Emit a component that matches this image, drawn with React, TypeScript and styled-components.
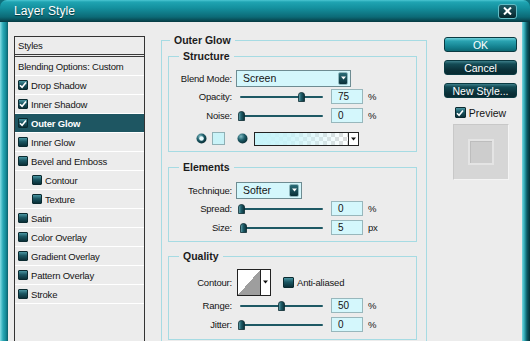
import React from 'react';
import styled, { createGlobalStyle } from 'styled-components';

const sans = `"Liberation Sans", Arial, sans-serif`;

const GlobalStyle = createGlobalStyle`
  html, body {
    margin: 0;
    padding: 0;
    background: #ececec;
  }
`;

const Window = styled.div`
  width: 530px;
  height: 341px;
  overflow: hidden;
  display: flex;
  flex-direction: column;
  background: #0f6f7b;
  font-family: ${sans};
  font-size: 9.5px;
  letter-spacing: -0.2px;
  color: #141414;
`;

const TitleBar = styled.div`
  height: 22px;
  flex: none;
  display: flex;
  align-items: center;
  justify-content: space-between;
  padding: 0 13px 0 14px;
  border-radius: 7px 7px 0 0;
  background: linear-gradient(#4cc6d2 0, #1fa4b2 2px, #14909e 8px, #0c6a76 17px, #07444d 21px, #053840 22px);
`;

const Title = styled.span`
  font-size: 12px;
  letter-spacing: 0.1px;
  color: #fff;
  text-shadow: 0 1px 1px rgba(0, 0, 0, 0.55);
`;

const CloseButton = styled.div`
  width: 19px;
  height: 15px;
  box-sizing: border-box;
  border: 1px solid #62bcc6;
  border-radius: 3px;
  background: linear-gradient(#1d5a64, #06262c);
  display: flex;
  align-items: center;
  justify-content: center;
`;

const Frame = styled.div`
  flex: 1;
  min-height: 0;
  display: flex;
  padding: 0 8px;
  background:
    linear-gradient(to right, #86dde5 0, #2aa9b6 3px, #138896 6px, #0b5d68 8px, transparent 8px),
    linear-gradient(to left, #042e35 0, #0b5a65 3px, #39b4c0 6px, #7fd6de 8px, transparent 8px),
    #0f6f7b;
`;

const Body = styled.div`
  flex: 1;
  min-width: 0;
  overflow: hidden;
  display: flex;
  align-items: flex-start;
  padding: 12px 0 0 6px;
  background: #ececec;
`;

/* ---------- left list ---------- */

const StyleList = styled.div`
  width: 131px;
  height: 330px;
  flex: none;
  box-sizing: border-box;
  margin-top: 2px;
  border: 1px solid #333;
  background: #ececec;
`;

const ListHeader = styled.div`
  height: 17px;
  display: flex;
  align-items: center;
  padding-left: 3px;
  border-bottom: 3px double #3a3a3a;
`;

const ListItem = styled.div<{ $active?: boolean; $indent?: boolean }>`
  height: 18px;
  display: flex;
  align-items: center;
  padding-left: ${p => (p.$indent ? 17 : 3)}px;
  border-bottom: 1px solid #fff;
  white-space: nowrap;
  background: ${p => (p.$active ? '#1e5662' : 'transparent')};
  color: ${p => (p.$active ? '#fff' : '#141414')};
  font-weight: ${p => (p.$active ? 'bold' : 'normal')};
`;

const Box = styled.span<{ $size?: number }>`
  width: ${p => p.$size ?? 10}px;
  height: ${p => p.$size ?? 10}px;
  flex: none;
  box-sizing: border-box;
  margin-right: 3px;
  border: 1px solid #0a2a30;
  border-radius: 1px;
  background: linear-gradient(#4a95a1, #1a5662 45%, #0b3038);
  display: flex;
  align-items: center;
  justify-content: center;
`;

const CheckBox = ({ checked, size }: { checked?: boolean; size?: number }) => (
  <Box $size={size}>
    {checked && (
      <svg width="8" height="8" viewBox="0 0 8 8">
        <path d="M1 4.2 L3.1 6.3 L7 1.6" fill="none" stroke="#fff" strokeWidth="1.6" />
      </svg>
    )}
  </Box>
);

/* ---------- groups ---------- */

const OuterGroup = styled.fieldset`
  width: 266px;
  flex: none;
  box-sizing: border-box;
  margin: 0 0 0 16px;
  padding: 4px 9px 40px 6px;
  border: 1px solid #a6dbe3;
`;

const Group = styled.fieldset<{ $gap?: number; $top: number; $bottom: number }>`
  margin: ${p => p.$gap ?? 0}px 0 0 0;
  padding: ${p => p.$top}px 0 ${p => p.$bottom}px 0;
  border: 1px solid #a6dbe3;
`;

const Legend = styled.legend<{ $indent: number }>`
  margin-left: ${p => p.$indent}px;
  padding: 0 4px;
  font-weight: bold;
  font-size: 10.5px;
  letter-spacing: 0;
  line-height: 12px;
  color: #1b1b1b;
`;

const Row = styled.div<{ $h?: number; $mt?: number }>`
  height: ${p => p.$h ?? 19}px;
  margin-top: ${p => p.$mt ?? 0}px;
  display: flex;
  align-items: center;
`;

const Label = styled.span`
  width: 63px;
  flex: none;
  margin-right: 4px;
  text-align: right;
`;

const Select = styled.div<{ $w: number }>`
  width: ${p => p.$w}px;
  height: 17px;
  box-sizing: border-box;
  border: 1px solid #6e8c92;
  background: #d4f7fc;
  display: flex;
  align-items: center;
  justify-content: space-between;
  padding: 0 2px 0 6px;
  font-size: 10.5px;
  letter-spacing: 0;
`;

const ArrowButton = styled.span`
  width: 10px;
  height: 13px;
  box-sizing: border-box;
  border: 1px solid #8fb8be;
  border-radius: 2px;
  background: linear-gradient(#2a6d78, #0a2f37);
  display: flex;
  align-items: center;
  justify-content: center;
`;

const DownArrow = ({ color = '#fff' }: { color?: string }) => (
  <svg width="5" height="4" viewBox="0 0 5 4">
    <path d="M0 0.5 H5 L2.5 3.5 Z" fill={color} />
  </svg>
);

const SliderBox = styled.div`
  position: relative;
  width: 91px;
  height: 19px;
  flex: none;
  display: flex;
  align-items: center;
`;

const Track = styled.div`
  width: 83px;
  height: 2px;
  margin-left: 4px;
  border-radius: 1px;
  background: #1d5864;
`;

const Thumb = styled.svg`
  position: absolute;
  top: 5px;
`;

const Slider = ({ value }: { value: number }) => (
  <SliderBox>
    <Track />
    <Thumb width="7" height="10" viewBox="0 0 7 10" style={{ left: 2 + value * 80 }}>
      <defs>
        <linearGradient id="thumbShade" x1="0" x2="1" y1="0" y2="0">
          <stop offset="0" stopColor="#6aa9b3" />
          <stop offset="0.45" stopColor="#1d5c68" />
          <stop offset="1" stopColor="#0a2f37" />
        </linearGradient>
      </defs>
      <path d="M0.5 3 Q0.5 0.5 3.5 0.5 Q6.5 0.5 6.5 3 L6.5 9.5 L0.5 9.5 Z" fill="url(#thumbShade)" stroke="#0a2a30" strokeWidth="0.8" />
    </Thumb>
  </SliderBox>
);

const NumberField = styled.div`
  width: 32px;
  height: 15px;
  flex: none;
  box-sizing: border-box;
  margin-left: 4px;
  padding-left: 6px;
  border: 1px solid #98b7bc;
  background: #d4f7fc;
  display: flex;
  align-items: center;
  font-size: 10px;
  letter-spacing: 0;
`;

const Unit = styled.span`
  margin-left: 5px;
`;

const Swatch = styled.span`
  width: 13px;
  height: 13px;
  box-sizing: border-box;
  margin-left: 5px;
  border: 1px solid #8fb0b5;
  background: #c9f3f8;
`;

const Spacer = styled.span<{ $w: number }>`
  width: ${p => p.$w}px;
  flex: none;
`;

const GradientBar = styled.div`
  width: 105px;
  height: 14px;
  box-sizing: border-box;
  margin-left: 6px;
  border: 1px solid #222;
  display: flex;
`;

const GradientFill = styled.div`
  flex: 1;
  background:
    linear-gradient(to right, #c6f4fa 0%, rgba(198, 244, 250, 0.85) 35%, rgba(198, 244, 250, 0) 100%),
    repeating-conic-gradient(#dcdcdc 0 25%, #fff 0 50%) 0 0 / 8px 8px;
`;

const ArrowSegment = styled.div`
  width: 9px;
  flex: none;
  border-left: 1px solid #222;
  background: #fff;
  display: flex;
  align-items: center;
  justify-content: center;
`;

const ContourBox = styled.div`
  width: 34px;
  height: 27px;
  box-sizing: border-box;
  margin-left: 1px;
  border: 1px solid #222;
  display: flex;
`;

const ContourCurve = styled.div`
  flex: 1;
  background: linear-gradient(to bottom right, #fff 50%, #9e9e9e 50%);
`;

const CheckLabel = styled.label`
  display: flex;
  align-items: center;
  margin-left: 12px;
`;

const Radio = ({ selected }: { selected?: boolean }) => (
  <svg width="11" height="11" viewBox="0 0 11 11" style={{ flex: 'none' }}>
    <defs>
      <radialGradient id={selected ? 'radioOn' : 'radioOff'} cx="0.35" cy="0.3" r="0.75">
        <stop offset="0" stopColor="#7fbac3" />
        <stop offset="0.5" stopColor="#1d5c68" />
        <stop offset="1" stopColor="#072a31" />
      </radialGradient>
    </defs>
    <circle cx="5.5" cy="5.5" r="5" fill={`url(#${selected ? 'radioOn' : 'radioOff'})`} />
    {selected && <circle cx="5.5" cy="5.5" r="2.3" fill="#e9fbfd" />}
  </svg>
);

/* ---------- right column ---------- */

const ButtonColumn = styled.div`
  width: 73px;
  flex: none;
  margin: 3px 0 0 17px;
  display: flex;
  flex-direction: column;
  align-items: center;
  gap: 8px;
`;

const Button = styled.div<{ $primary?: boolean }>`
  width: 73px;
  height: 15px;
  box-sizing: border-box;
  border: 1px solid #0a3a42;
  border-radius: 3px;
  background: ${p =>
    p.$primary
      ? 'linear-gradient(#6fd0da 0, #2aa3b1 3px, #14818f 9px, #0c6773 100%)'
      : 'linear-gradient(#3d7e89 0, #134a54 3px, #0a3038 9px, #082a31 100%)'};
  color: #fff;
  font-size: 10.5px;
  letter-spacing: 0;
  display: flex;
  align-items: center;
  justify-content: center;
`;

const PreviewToggle = styled.label`
  display: flex;
  align-items: center;
  height: 13px;
  font-size: 10.5px;
  letter-spacing: 0;
`;

const PreviewBox = styled.div`
  width: 56px;
  height: 56px;
  box-sizing: border-box;
  margin-top: -3px;
  border: 1px solid;
  border-color: #c8c8c8 #f4f4f4 #f4f4f4 #c8c8c8;
  background: #d6d6d6;
  display: flex;
  align-items: center;
  justify-content: center;
`;

const PreviewSample = styled.div`
  width: 26px;
  height: 26px;
  box-sizing: border-box;
  border: 2px solid #e4e4e4;
  box-shadow: inset 1px 1px 0 #bdbdbd;
  background: #cdcdcd;
`;

const styleItems = [
  { label: 'Drop Shadow', checked: true },
  { label: 'Inner Shadow', checked: true },
  { label: 'Outer Glow', checked: true, active: true },
  { label: 'Inner Glow' },
  { label: 'Bevel and Emboss' },
  { label: 'Contour', indent: true },
  { label: 'Texture', indent: true },
  { label: 'Satin' },
  { label: 'Color Overlay' },
  { label: 'Gradient Overlay' },
  { label: 'Pattern Overlay' },
  { label: 'Stroke' },
];

const SliderRow = ({ label, value, text, unit }: { label: string; value: number; text: string; unit: string }) => (
  <Row>
    <Label>{label}</Label>
    <Slider value={value} />
    <NumberField>{text}</NumberField>
    <Unit>{unit}</Unit>
  </Row>
);

const App: React.FC = () => {
  return (
    <>
      <GlobalStyle />
      <Window>
        <TitleBar>
          <Title>Layer Style</Title>
          <CloseButton>
            <svg width="9" height="8" viewBox="0 0 9 8">
              <path d="M1 0.5 L8 7.5 M8 0.5 L1 7.5" stroke="#fff" strokeWidth="2" />
            </svg>
          </CloseButton>
        </TitleBar>
        <Frame>
          <Body>
            <StyleList>
              <ListHeader>Styles</ListHeader>
              <ListItem>Blending Options: Custom</ListItem>
              {styleItems.map(item => (
                <ListItem key={item.label} $active={item.active} $indent={item.indent}>
                  <CheckBox checked={item.checked} />
                  {item.label}
                </ListItem>
              ))}
            </StyleList>

            <OuterGroup>
              <Legend $indent={2}>Outer Glow</Legend>

              <Group $top={7} $bottom={3}>
                <Legend $indent={10}>Structure</Legend>
                <Row $h={18}>
                  <Label>Blend Mode:</Label>
                  <Select $w={115}>
                    Screen
                    <ArrowButton>
                      <DownArrow />
                    </ArrowButton>
                  </Select>
                </Row>
                <SliderRow label="Opacity:" value={0.75} text="75" unit="%" />
                <SliderRow label="Noise:" value={0} text="0" unit="%" />
                <Row $mt={4}>
                  <Spacer $w={27} />
                  <Radio selected />
                  <Swatch />
                  <Spacer $w={12} />
                  <Radio />
                  <GradientBar>
                    <GradientFill />
                    <ArrowSegment>
                      <DownArrow color="#111" />
                    </ArrowSegment>
                  </GradientBar>
                </Row>
              </Group>

              <Group $gap={9} $top={8} $bottom={4}>
                <Legend $indent={10}>Elements</Legend>
                <Row $h={18}>
                  <Label>Technique:</Label>
                  <Select $w={66}>
                    Softer
                    <ArrowButton>
                      <DownArrow />
                    </ArrowButton>
                  </Select>
                </Row>
                <SliderRow label="Spread:" value={0} text="0" unit="%" />
                <SliderRow label="Size:" value={0.02} text="5" unit="px" />
              </Group>

              <Group $gap={8} $top={6} $bottom={5}>
                <Legend $indent={10}>Quality</Legend>
                <Row $h={28}>
                  <Label>Contour:</Label>
                  <ContourBox>
                    <ContourCurve />
                    <ArrowSegment>
                      <DownArrow color="#111" />
                    </ArrowSegment>
                  </ContourBox>
                  <CheckLabel>
                    <CheckBox size={11} />
                    Anti-aliased
                  </CheckLabel>
                </Row>
                <SliderRow label="Range:" value={0.5} text="50" unit="%" />
                <SliderRow label="Jitter:" value={0} text="0" unit="%" />
              </Group>
            </OuterGroup>

            <ButtonColumn>
              <Button $primary>OK</Button>
              <Button>Cancel</Button>
              <Button>New Style...</Button>
              <PreviewToggle>
                <CheckBox checked size={11} />
                Preview
              </PreviewToggle>
              <PreviewBox>
                <PreviewSample />
              </PreviewBox>
            </ButtonColumn>
          </Body>
        </Frame>
      </Window>
    </>
  );
};

export default App;
